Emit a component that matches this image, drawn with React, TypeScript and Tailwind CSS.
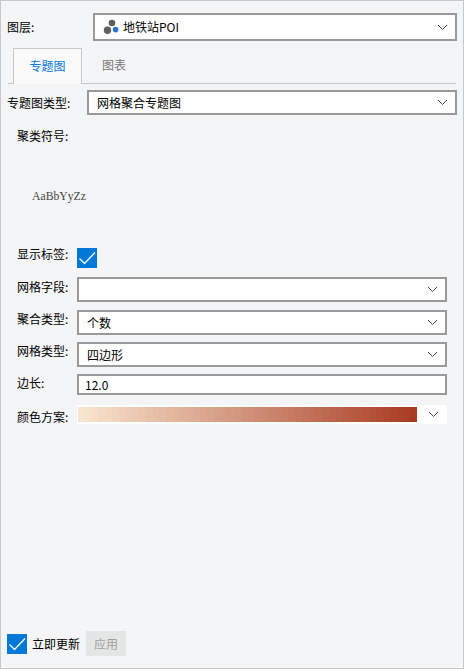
import { useState } from "react";

const RAMP_STEPS = 50;
const RAMP_START = [249, 229, 207];
const RAMP_END = [168, 60, 34];

const rampColors = Array.from({ length: RAMP_STEPS }, (_, i) => {
  const t = i / (RAMP_STEPS - 1);
  const [r, g, b] = RAMP_START.map((c, k) => Math.round(c + (RAMP_END[k] - c) * t));
  return `rgb(${r}, ${g}, ${b})`;
});

function Chevron() {
  return (
    <svg className="w-[11px] h-[7px] shrink-0" viewBox="0 0 11 7" fill="none">
      <path d="M1 1L5.5 5.5L10 1" stroke="#444444" strokeWidth="1" />
    </svg>
  );
}

function LayerIcon() {
  return (
    <svg className="w-[16px] h-[16px] shrink-0" viewBox="0 0 16 16">
      <circle cx="9" cy="4" r="3.3" fill="#5f5f5f" />
      <circle cx="4.5" cy="11.3" r="3.7" fill="#5f5f5f" />
      <circle cx="12.6" cy="10.6" r="2.8" fill="#2a6fd6" />
    </svg>
  );
}

function Select({ value, icon, className = "h-[25px]" }: any) {
  return (
    <div
      className={`flex flex-1 items-center border-2 border-[#999999] bg-white pl-2 pr-[7px] ${className}`}
    >
      {icon}
      <span className="flex-1">{value}</span>
      <Chevron />
    </div>
  );
}

function CheckBox({ checked, onChange }: any) {
  return (
    <button
      type="button"
      role="checkbox"
      aria-checked={checked}
      onClick={() => onChange(!checked)}
      className="w-5 h-5 shrink-0 bg-[#0078d7]"
    >
      {checked && (
        <svg className="w-5 h-5" viewBox="0 0 20 20" fill="none">
          <path d="M2.5 10.5L7.5 15.5L18 4.5" stroke="#ffffff" strokeWidth="1.3" />
        </svg>
      )}
    </button>
  );
}

function Field({ label, className, labelClass = "leading-[18px]", children }: any) {
  return (
    <div className={`flex items-start ${className}`}>
      <span className={`w-[60px] shrink-0 ${labelClass}`}>{label}</span>
      {children}
    </div>
  );
}

export default function App() {
  const [showLabel, setShowLabel] = useState(true);
  const [autoUpdate, setAutoUpdate] = useState(true);
  const [sideLength, setSideLength] = useState("12.0");

  return (
    <div className="flex flex-col w-[464px] h-[669px] border border-[#c8c8c8] bg-[#f4f5f7] pt-3 font-['Noto_Sans_CJK_SC',sans-serif] text-[12px] leading-4 text-black">
      {/* Layer */}
      <div className="flex items-center pl-[6px] pr-[6px]">
        <span className="w-[86px]">图层:</span>
        <Select
          className="h-7"
          value={<span className="pl-1">地铁站POI</span>}
          icon={<LayerIcon />}
        />
      </div>

      {/* Tabs */}
      <div className="flex mt-[7px] ml-[7px] mr-[7px] h-9">
        <div className="w-[5px] border-b border-[#c8c8c8]" />
        <div className="flex items-center justify-center w-[69px] pb-[2px] border border-b-0 border-[#c8c8c8] bg-[#f9f9f9] text-[#0078d7]">
          专题图
        </div>
        <div className="flex flex-1 items-center pl-[20px] pb-px border-b border-[#c8c8c8] text-[#777777]">
          图表
        </div>
      </div>

      {/* Map type */}
      <div className="flex items-center mt-[6px] pl-[6px] pr-[6px]">
        <span className="w-[80px]">专题图类型:</span>
        <Select value="网格聚合专题图" />
      </div>

      <div className="flex flex-col pl-4 pr-4">
        <div className="mt-[11px] leading-5">聚类符号:</div>
        <div className="mt-[40px] ml-[15px] origin-left scale-x-90 leading-5 font-['Liberation_Serif',serif] text-[13px] text-[#444444]">
          AaBbYyZz
        </div>

        <Field label="显示标签:" labelClass="leading-5" className="mt-[38px] h-[25px]">
          <div className="pt-1">
            <CheckBox checked={showLabel} onChange={setShowLabel} />
          </div>
        </Field>
        <Field label="网格字段:" labelClass="leading-5" className="mt-[8px] h-[25px]">
          <Select value="" />
        </Field>
        <Field label="聚合类型:" className="mt-[8px] h-[25px]">
          <Select value="个数" />
        </Field>
        <Field label="网格类型:" className="mt-[7px] h-[25px]">
          <Select value="四边形" />
        </Field>
        <Field label="边长:" className="mt-[7px] h-[21px]">
          <input
            className="flex-1 h-[21px] px-[6px] pb-px border-2 border-[#999999] bg-white outline-none"
            value={sideLength}
            onChange={(e) => setSideLength(e.target.value)}
          />
        </Field>
        <Field label="颜色方案:" labelClass="leading-[23px]" className="mt-[10px] h-[19px]">
          <div className="flex flex-1 items-center h-[19px] bg-white pl-px pr-[8px]">
            <div className="flex w-[339px] h-[15px] mr-auto">
              {rampColors.map((color, i) => (
                <div key={i} className="flex-1" style={{ backgroundColor: color }} />
              ))}
            </div>
            <Chevron />
          </div>
        </Field>
      </div>

      {/* Footer */}
      <div className="flex items-center mt-auto mb-3 pl-[6px] h-[25px]">
        <CheckBox checked={autoUpdate} onChange={setAutoUpdate} />
        <span className="pl-[5px] pt-px">立即更新</span>
        <button
          type="button"
          disabled
          className="ml-[6px] w-10 h-[25px] bg-[#e4e6e6] text-[#a0a0a0]"
        >
          应用
        </button>
      </div>
    </div>
  );
}
